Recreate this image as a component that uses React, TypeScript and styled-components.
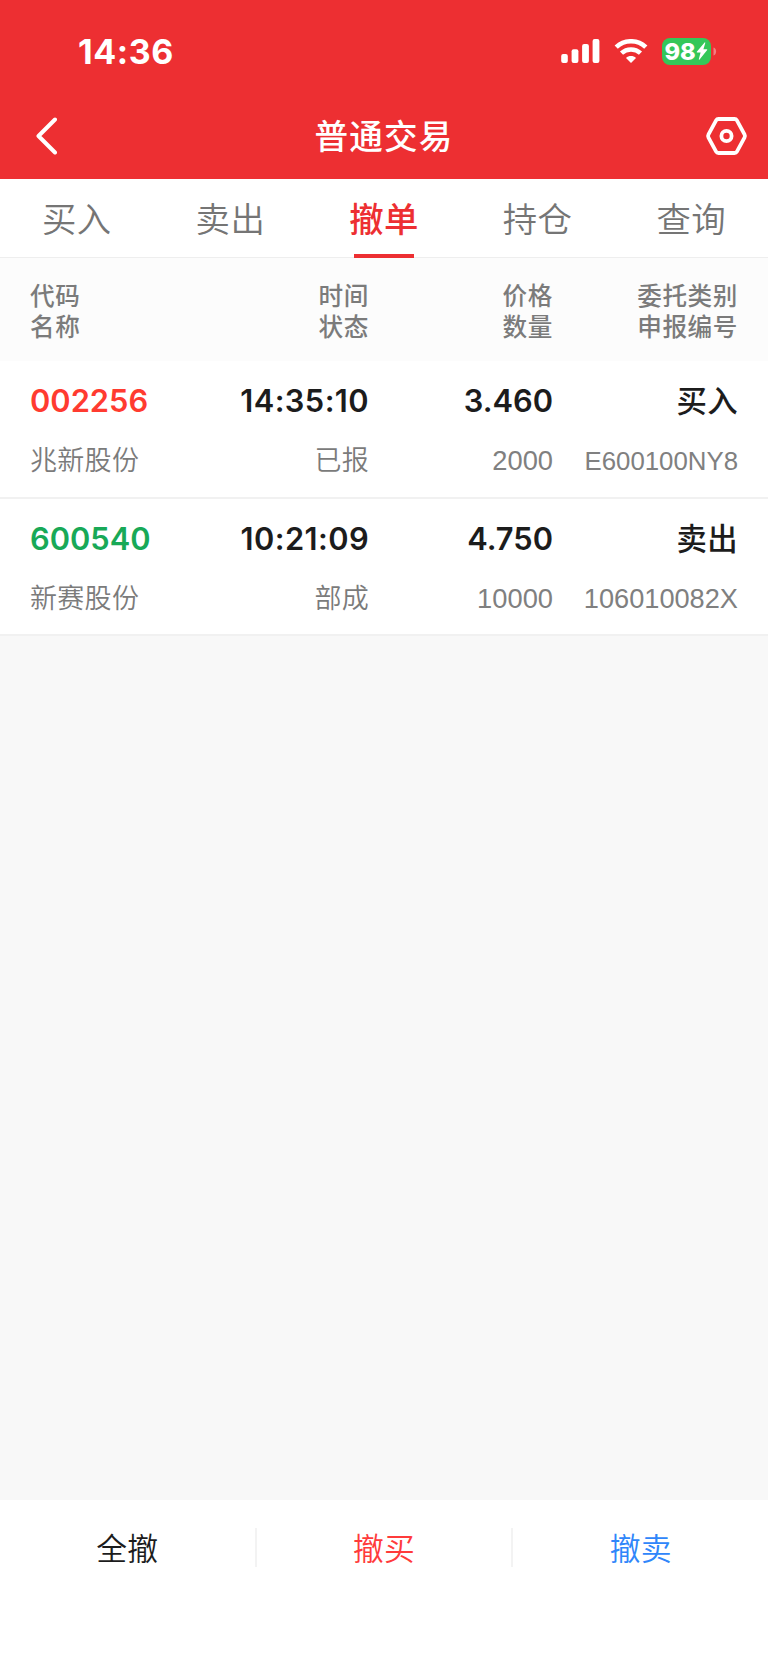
import React from "react";
import styled, { createGlobalStyle } from "styled-components";

const GlobalStyle = createGlobalStyle`
  * { box-sizing: border-box; }
  body {
    margin: 0;
    background: #f8f8f8;
    font-family: "Inter", "Noto Sans CJK SC", sans-serif;
  }
`;

const Screen = styled.div`
  display: flex;
  flex-direction: column;
  width: 768px;
  height: 1663px;
  overflow: hidden;
  background: #f8f8f8;
`;

const Header = styled.header`
  display: flex;
  flex-direction: column;
  height: 179px;
  background: #ed2f32;
  color: #fff;
`;

const StatusBar = styled.div`
  display: flex;
  align-items: center;
  justify-content: space-between;
  height: 94px;
  padding: 8px 51.5px 0 78px;
`;

const Clock = styled.span`
  padding-top: 1px;
  font-size: 34px;
  line-height: 40px;
  font-weight: 750;
  letter-spacing: 0.6px;
`;

const StatusIcons = styled.div`
  display: flex;
  align-items: center;
  height: 28px;
`;

const SignalIcon = styled.svg`
  margin-right: 14px;
`;

const WifiIcon = styled.svg`
  margin-right: 14px;
`;

const Battery = styled.div`
  display: flex;
  align-items: center;
  width: 49.5px;
  height: 27px;
  padding-left: 3px;
  border-radius: 8px;
  background: #34c759;
  font-size: 23.6px;
  line-height: 27px;
  font-weight: 850;
`;

const BatteryTip = styled.svg`
  margin-left: 1.5px;
`;

const NavBar = styled.nav`
  display: flex;
  align-items: center;
  justify-content: space-between;
  height: 85px;
  padding: 0 20px 0 35px;
`;

const NavSlot = styled.div<{ $end?: boolean }>`
  display: flex;
  width: 100px;
  margin-top: -1px;
  justify-content: ${(p) => (p.$end ? "flex-end" : "flex-start")};
`;

const Title = styled.h1`
  margin: 0 0 0 -15px;
  font-size: 33.6px;
  line-height: 48px;
  font-weight: 500;
  letter-spacing: 1.2px;
`;

const Tabs = styled.div`
  display: flex;
  height: 79px;
  background: #fff;
  border-bottom: 1px solid #eee;
`;

const Tab = styled.div<{ $active?: boolean }>`
  display: flex;
  flex: 1;
  flex-direction: column;
  align-items: center;
  justify-content: space-between;
  height: 79px;
  padding-top: 6px;
  font-size: 34.4px;
  line-height: 69px;
  letter-spacing: 0.4px;
  font-weight: ${(p) => (p.$active ? 500 : 350)};
  color: ${(p) => (p.$active ? "#ed2f32" : "#757575")};
`;

const Underline = styled.div`
  width: 60px;
  height: 4px;
  background: #ed2f32;
`;

const columns = "155px 184px 184px 185px";

const TableHead = styled.div`
  display: grid;
  grid-template-columns: ${columns};
  height: 103px;
  padding: 23px 30px 0;
  background: #fcfcfc;
`;

const HeadCell = styled.div`
  display: flex;
  flex-direction: column;
  font-size: 24.6px;
  line-height: 31px;
  letter-spacing: 0.6px;
  font-weight: 500;
  color: #7b7b7b;
  text-align: right;
  &:first-child { text-align: left; }
`;

const OrderRow = styled.div`
  display: grid;
  grid-template-columns: ${columns};
  height: 137.7px;
  padding: 10px 30px 0;
  background: #fff;
  border-bottom: 2px solid #f1f1f1;
`;

const OrderCell = styled.div`
  display: flex;
  flex-direction: column;
  align-items: flex-end;
  white-space: nowrap;
  &:first-child { align-items: flex-start; }
`;

const Main = styled.div<{ $color?: string; $kind?: "cjk" | "time" }>`
  font-size: ${(p) => (p.$kind === "cjk" ? "30.4px" : "30.8px")};
  line-height: 60px;
  font-weight: ${(p) => (p.$kind === "cjk" ? 500 : 600)};
  letter-spacing: ${(p) => (p.$kind ? "0.4px" : "0")};
  color: ${(p) => p.$color ?? "#1c1c1c"};
`;

const Sub = styled.div<{ $size?: number }>`
  font-family: "Liberation Sans", sans-serif;
  font-size: ${(p) => p.$size ?? 27.3}px;
  line-height: 60px;
  color: #808080;
`;

const SubText = styled.div`
  font-size: 27px;
  line-height: 60px;
  font-weight: 350;
  letter-spacing: 0.3px;
  color: #7b7b7b;
`;

const Filler = styled.div`
  flex: 1;
`;

const Actions = styled.footer`
  display: flex;
  height: 163px;
  padding-top: 28px;
  background: #fff;
`;

const Action = styled.div<{ $color: string }>`
  flex: 1;
  height: 39px;
  font-size: 30.8px;
  line-height: 41px;
  letter-spacing: 0.2px;
  font-weight: 350;
  text-align: center;
  color: ${(p) => p.$color};
  &:not(:last-child) { border-right: 2px solid #f3f3f3; }
`;

const tabs = ["买入", "卖出", "撤单", "持仓", "查询"];

const heads = [
  ["代码", "名称"],
  ["时间", "状态"],
  ["价格", "数量"],
  ["委托类别", "申报编号"],
];

const orders = [
  { code: "002256", color: "#ff3b30", name: "兆新股份", time: "14:35:10", state: "已报", price: "3.460", amount: "2000", side: "买入", serial: "E600100NY8", serialSize: 25.8 },
  { code: "600540", color: "#18a957", name: "新赛股份", time: "10:21:09", state: "部成", price: "4.750", amount: "10000", side: "卖出", serial: "106010082X", serialSize: 27.2 },
];

const actions = [
  { label: "全撤", color: "#1c1c1c" },
  { label: "撤买", color: "#ff3b3b" },
  { label: "撤卖", color: "#2f86fa" },
];

export default function App() {
  return (
    <Screen>
      <GlobalStyle />
      <Header>
        <StatusBar>
          <Clock>14:36</Clock>
          <StatusIcons>
            <SignalIcon width="39" height="24" viewBox="0 0 39 24" fill="#fff">
              <rect x="0.2" y="15" width="6.6" height="9" rx="2" />
              <rect x="10.6" y="10.3" width="6.8" height="13.7" rx="2" />
              <rect x="21.1" y="5" width="6.8" height="19" rx="2" />
              <rect x="31.6" y="0" width="6.8" height="24" rx="2" />
            </SignalIcon>
            <WifiIcon width="34" height="24" viewBox="0 0 34 24" fill="none" stroke="#fff" strokeWidth="4.6">
              <path d="M2.2 8.2C10.5 0.3 23.5 0.3 31.8 8.2" />
              <path d="M7.5 14.1C12.9 9.2 21.1 9.2 26.5 14.1" />
              <path d="M17 24L12 18.9C14.7 16.5 19.3 16.5 22 18.9Z" fill="#fff" stroke="none" />
            </WifiIcon>
            <Battery>
              <span>98</span>
              <svg width="12" height="18" viewBox="0 0 12 18" fill="#fff">
                <path d="M8.6 0.4L0.8 9.8Q0.3 10.6 1.2 10.6H4.6L2.8 17.2Q2.9 18 3.6 17.4L11.2 8Q11.6 7.2 10.7 7.2H7.4L9.3 0.9Q9.3 0 8.6 0.4Z" />
              </svg>
            </Battery>
            <BatteryTip width="4" height="9" viewBox="0 0 4 9">
              <path d="M0.5 0.5C4 1.4 4 7.6 0.5 8.5Z" fill="#f37f81" />
            </BatteryTip>
          </StatusIcons>
        </StatusBar>
        <NavBar>
          <NavSlot>
            <svg width="22" height="38" viewBox="0 0 22 38" fill="none" stroke="#fff" strokeWidth="4" strokeLinecap="round" strokeLinejoin="round">
              <path d="M20 2.5L3.5 19L20 35.5" />
            </svg>
          </NavSlot>
          <Title>普通交易</Title>
          <NavSlot $end>
            <svg width="43" height="40" viewBox="0 0 43 40" fill="none" stroke="#fff" strokeWidth="3.8" strokeLinejoin="round">
              <path d="M13.5 3H29.5Q31.1 3 31.9 4.4L39.5 18.4Q40.4 20 39.5 21.6L31.9 35.6Q31.1 37 29.5 37H13.5Q11.9 37 11.1 35.6L3.5 21.6Q2.6 20 3.5 18.4L11.1 4.4Q11.9 3 13.5 3Z" />
              <circle cx="21.5" cy="20" r="5.1" />
            </svg>
          </NavSlot>
        </NavBar>
      </Header>
      <Tabs>
        {tabs.map((t) => (
          <Tab key={t} $active={t === "撤单"}>
            <span>{t}</span>
            {t === "撤单" && <Underline />}
          </Tab>
        ))}
      </Tabs>
      <TableHead>
        {heads.map(([a, b]) => (
          <HeadCell key={a}>
            <span>{a}</span>
            <span>{b}</span>
          </HeadCell>
        ))}
      </TableHead>
      {orders.map((o) => (
        <OrderRow key={o.code}>
          <OrderCell>
            <Main $color={o.color}>{o.code}</Main>
            <SubText>{o.name}</SubText>
          </OrderCell>
          <OrderCell>
            <Main $kind="time">{o.time}</Main>
            <SubText>{o.state}</SubText>
          </OrderCell>
          <OrderCell>
            <Main>{o.price}</Main>
            <Sub>{o.amount}</Sub>
          </OrderCell>
          <OrderCell>
            <Main $kind="cjk">{o.side}</Main>
            <Sub $size={o.serialSize}>{o.serial}</Sub>
          </OrderCell>
        </OrderRow>
      ))}
      <Filler />
      <Actions>
        {actions.map((a) => (
          <Action key={a.label} $color={a.color}>{a.label}</Action>
        ))}
      </Actions>
    </Screen>
  );
}
